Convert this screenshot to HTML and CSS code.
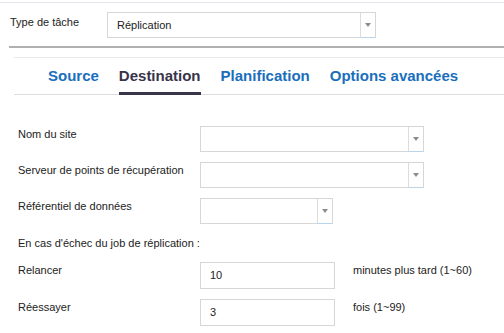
FILE: index.html
```html
<!DOCTYPE html>
<html lang="fr">
<head>
<meta charset="utf-8">
<link rel="stylesheet" href="styles.css">
</head>
<body>
<div class="page">
  <div class="task-row">
    <div class="task-label">Type de tâche</div>
    <div class="select task-select"><span class="select-value">Réplication</span><span class="select-arrow"></span></div>
  </div>
  <div class="separator"></div>
  <div class="panel">
    <nav class="tabs">
      <span class="tab">Source</span>
      <span class="tab active">Destination</span>
      <span class="tab">Planification</span>
      <span class="tab">Options avancées</span>
    </nav>
    <div class="form">
      <div class="row">
        <div class="label">Nom du site</div>
        <div class="select wide"><span class="select-value"></span><span class="select-arrow"></span></div>
      </div>
      <div class="row">
        <div class="label">Serveur de points de récupération</div>
        <div class="select wide"><span class="select-value"></span><span class="select-arrow"></span></div>
      </div>
      <div class="row">
        <div class="label">Référentiel de données</div>
        <div class="select narrow"><span class="select-value"></span><span class="select-arrow"></span></div>
      </div>
      <div class="note">En cas d'échec du job de réplication :</div>
      <div class="row">
        <div class="label">Relancer</div>
        <div class="input">10</div>
        <div class="hint">minutes plus tard (1~60)</div>
      </div>
      <div class="row">
        <div class="label">Réessayer</div>
        <div class="input">3</div>
        <div class="hint">fois (1~99)</div>
      </div>
    </div>
  </div>
</div>
</body>
</html>
```

FILE: styles.css
```css
html, body {
  margin: 0;
  padding: 0;
  background: #ffffff;
}

body {
  font-family: "Liberation Sans", Arial, sans-serif;
  font-size: 11px;
  color: #222222;
}

.page {
  margin-top: 2px;
  border-top: 1px solid #e3e6eb;
  overflow: hidden;
  height: 330px;
}

.task-row {
  display: flex;
  align-items: flex-start;
  padding: 9px 0 0 10px;
}

.task-label {
  width: 97px;
  padding-top: 3px;
  line-height: 14px;
}

.select {
  display: flex;
  box-sizing: border-box;
  height: 26px;
  border: 1px solid #d6d6d6;
  background: #ffffff;
}

.task-select {
  width: 269px;
}

.select-value {
  flex: 1;
  padding-left: 9px;
  line-height: 24px;
  color: #222222;
}

.select-arrow {
  position: relative;
  width: 14px;
  border-left: 1px solid #dcdcdc;
  border-bottom: 1px solid #b8d5f0;
  margin-bottom: -1px;
}

.select-arrow::after {
  content: "";
  position: absolute;
  left: 4px;
  top: 10px;
  border-left: 3.5px solid transparent;
  border-right: 3.5px solid transparent;
  border-top: 4px solid #8c8c8c;
}

.separator {
  margin: 8px 0 0 9px;
  height: 2px;
  background: #b0b0b0;
}

.panel {
  margin: 9px 0 0 14px;
  border-top: 1px solid #e8eaee;
}

.tabs {
  display: flex;
  gap: 20px;
  padding-left: 34px;
  border-bottom: 1px solid #dedede;
}

.tab {
  font-size: 15px;
  font-weight: bold;
  line-height: 18px;
  padding: 9px 0 7px;
  border-bottom: 3px solid transparent;
  margin-bottom: -1px;
  color: #1a6fbc;
}

.tab.active {
  color: #38344a;
  border-bottom-color: #38344a;
}

.form {
  padding: 31px 0 0 4px;
  display: flex;
  flex-direction: column;
  gap: 10px;
}

.row {
  display: flex;
  align-items: flex-start;
}

.label {
  width: 182px;
  padding-top: 1px;
  line-height: 14px;
}

.wide {
  width: 224px;
}

.narrow {
  width: 133px;
}

.note {
  margin-top: 2px;
  line-height: 14px;
  margin-bottom: 2px;
}

.input {
  box-sizing: border-box;
  width: 135px;
  height: 27px;
  border: 1px solid #d6d6d6;
  padding-left: 9px;
  line-height: 25px;
  color: #222222;
}

.hint {
  margin-left: 18px;
  padding-top: 1px;
  line-height: 14px;
}
```
